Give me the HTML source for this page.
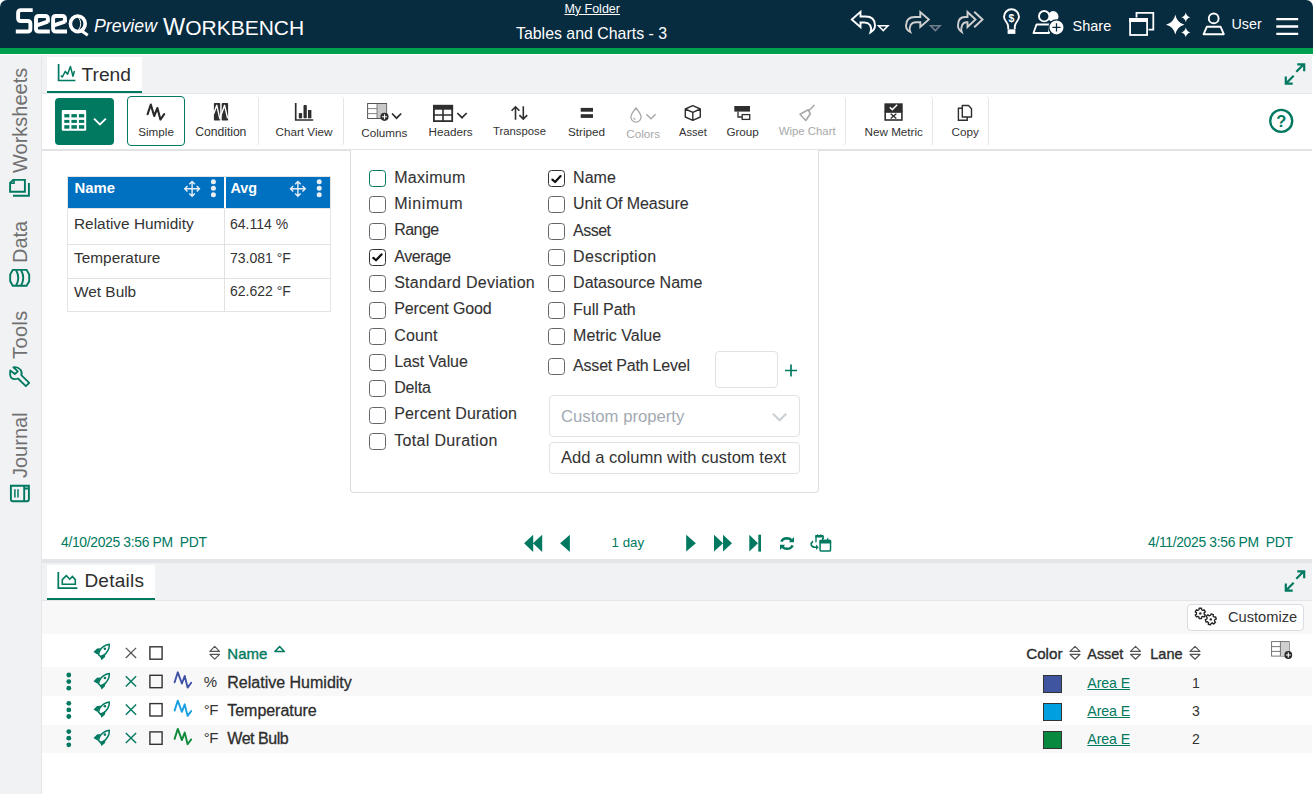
<!DOCTYPE html>
<html><head><meta charset="utf-8">
<style>
*{box-sizing:border-box;margin:0;padding:0}
html,body{width:1313px;height:794px;overflow:hidden;background:#fff;font-family:"Liberation Sans",sans-serif;color:#2d2d2d}
.a{position:absolute}
.t{position:absolute;white-space:nowrap;line-height:1;font-family:"Liberation Sans",sans-serif}
svg{position:absolute;overflow:visible}
#hdr{left:0;top:0;width:1313px;height:48px;background:#072b3f;border-radius:7px 7px 0 0}
#stripe{left:0;top:48px;width:1313px;height:6px;background:#00a050}
#side{left:0;top:55px;width:42px;height:739px;background:#f1f2f4;border-right:1px solid #e4e6e9}
.tabbar{background:#f1f2f4}
.tab{background:#fff;border-bottom:2px solid #007960}
.tlab{font-size:11.7px;color:#333}
.dis{color:#a8a8a8}
.grp{border-right:1px solid #e4e5e7;border-radius:0 4px 4px 0}
.cb{position:absolute;width:17px;height:17px;border:1.4px solid #62666b;border-radius:3.5px;background:#fff}
.dd{font-size:16px;color:#333;-webkit-text-stroke:0.1px #333}
.row{position:absolute;left:42px;width:1270px;height:29px}
.sb{-webkit-text-stroke:0.35px currentColor}
.sb2{-webkit-text-stroke:0.3px currentColor}
.teal{color:#007960}
</style></head><body>
<!-- HEADER -->
<div id="hdr" class="a"></div>
<div id="stripe" class="a"></div>
<div class="t" style="left:94px;top:18.4px;font-size:17.7px;font-style:italic;color:#fff">Preview</div>
<div class="t" style="left:163px;top:15.9px;font-size:23.5px;color:#fff">W<span style="font-size:21px">ORKBENCH</span></div>
<div class="t" style="left:564.4px;top:2.9px;font-size:12.5px;color:#fff;text-decoration:underline">My Folder</div>
<div class="t" style="left:516px;top:25.8px;font-size:15.9px;color:#fff">Tables and Charts - 3</div>
<div class="t" style="left:1072.5px;top:19px;font-size:14.5px;color:#fff">Share</div>
<div class="t" style="left:1231.5px;top:16.6px;font-size:14.3px;color:#fff">User</div>

<!-- SIDEBAR -->
<div id="side" class="a"></div>
<div class="t" style="left:10.0px;top:173.0px;font-size:20px;color:#707070;transform-origin:0 0;transform:rotate(-90deg)">Worksheets</div>
<div class="t" style="left:10.0px;top:262.5px;font-size:20px;color:#707070;transform-origin:0 0;transform:rotate(-90deg)">Data</div>
<div class="t" style="left:10.0px;top:358.5px;font-size:20px;color:#707070;transform-origin:0 0;transform:rotate(-90deg);letter-spacing:0.4px">Tools</div>
<div class="t" style="left:10.0px;top:477.5px;font-size:20px;color:#707070;transform-origin:0 0;transform:rotate(-90deg)">Journal</div>


<!-- TREND TAB BAR -->
<div class="a tabbar" style="left:42px;top:55px;width:1270px;height:38px"></div>
<div class="a tab" style="left:47px;top:57px;width:95px;height:36px"></div>
<div class="t" style="left:81.5px;top:64.5px;font-size:19.2px;color:#2d2d2d">Trend</div>

<!-- TOOLBAR -->
<div class="a" style="left:42px;top:93px;width:1270px;height:58px;background:#fff;border-top:1px solid #e3e5e8;border-bottom:2px solid #e1e3e6"></div>
<div class="a" style="left:55px;top:98px;width:59px;height:47px;background:#007960;border-radius:4px"></div>
<div class="a grp" style="left:127px;top:96px;width:132px;height:50px"></div>
<div class="a" style="left:127px;top:96px;width:58px;height:50px;border:1.3px solid #007960;border-radius:4px"></div>
<div class="a grp" style="left:259px;top:96px;width:85px;height:50px"></div>
<div class="a grp" style="left:343px;top:96px;width:503px;height:50px"></div>
<div class="a grp" style="left:846px;top:96px;width:87px;height:50px"></div>
<div class="a grp" style="left:933px;top:96px;width:56px;height:50px"></div>
<div class="t tlab" style="left:138.2px;top:126px">Simple</div>
<div class="t tlab" style="left:195.3px;top:126px;font-size:12.2px;letter-spacing:-0.05px">Condition</div>
<div class="t tlab" style="left:275.5px;top:126px">Chart View</div>
<div class="t tlab" style="left:361.3px;top:127px">Columns</div>
<div class="t tlab" style="left:428.5px;top:126px">Headers</div>
<div class="t tlab" style="left:493px;top:126px;font-size:11.3px;top:126.4px">Transpose</div>
<div class="t tlab" style="left:568px;top:126px">Striped</div>
<div class="t tlab dis" style="left:626.3px;top:127.5px">Colors</div>
<div class="t tlab" style="left:679px;top:126.5px;font-size:11.1px">Asset</div>
<div class="t tlab" style="left:726.4px;top:126px">Group</div>
<div class="t tlab dis" style="left:778.7px;top:126.3px;font-size:11.4px">Wipe Chart</div>
<div class="t tlab" style="left:864.5px;top:126px">New Metric</div>
<div class="t tlab" style="left:951.5px;top:126px">Copy</div>

<!-- TABLE -->
<div class="a" style="left:67px;top:176px;width:264px;height:136px;border:1px solid #e4e4e4;background:#fff"></div>
<div class="a" style="left:68px;top:177px;width:262px;height:31px;background:#0070c0"></div>
<div class="a" style="left:67px;top:208px;width:264px;height:1px;background:#e4e4e4"></div>
<div class="a" style="left:224px;top:177px;width:1.5px;height:31px;background:#fff"></div>
<div class="a" style="left:224px;top:208px;width:1px;height:104px;background:#e2e2e2"></div>
<div class="a" style="left:67px;top:244px;width:264px;height:1px;background:#e2e2e2"></div>
<div class="a" style="left:67px;top:278px;width:264px;height:1px;background:#e2e2e2"></div>
<div class="t" style="left:74.5px;top:181.2px;font-size:14.9px;font-weight:bold;color:#fff">Name</div>
<div class="t" style="left:230.5px;top:181.2px;font-size:14.4px;font-weight:bold;color:#fff">Avg</div>
<div class="t" style="left:74px;top:215.6px;font-size:15.4px;color:#333">Relative Humidity</div>
<div class="t" style="left:74px;top:249.7px;font-size:15.4px;color:#333">Temperature</div>
<div class="t" style="left:74px;top:283.7px;font-size:15.4px;color:#333">Wet Bulb</div>
<div class="t" style="left:230px;top:216.7px;font-size:14px;color:#333">64.114 %</div>
<div class="t" style="left:230px;top:250.8px;font-size:14px;color:#333">73.081 °F</div>
<div class="t" style="left:230px;top:284.3px;font-size:14px;color:#333">62.622 °F</div>

<!-- DROPDOWN -->
<div class="a" style="left:350px;top:150px;width:469px;height:343px;background:#fff;border:1px solid #dadde1;border-top:none;border-radius:0 0 4px 4px"></div>

<div class="cb" style="left:369px;top:170.0px;border-color:#007960"></div>
<div class="t dd" style="left:394.2px;top:169.7px;font-size:16px;letter-spacing:0.31px">Maximum</div>
<div class="cb" style="left:369px;top:196.3px;"></div>
<div class="t dd" style="left:394.2px;top:196.0px;font-size:16px;letter-spacing:0.60px">Minimum</div>
<div class="cb" style="left:369px;top:222.6px;"></div>
<div class="t dd" style="left:394.2px;top:222.3px;font-size:16px;letter-spacing:-0.54px">Range</div>
<div class="cb" style="left:369px;top:248.9px;border-color:#333"></div>
<div class="t dd" style="left:394.2px;top:248.6px;font-size:16px;letter-spacing:-0.37px">Average</div>
<div class="cb" style="left:369px;top:275.2px;"></div>
<div class="t dd" style="left:394.2px;top:274.9px;font-size:16px;letter-spacing:0.26px">Standard Deviation</div>
<div class="cb" style="left:369px;top:301.5px;"></div>
<div class="t dd" style="left:394.2px;top:301.2px;font-size:16px;letter-spacing:-0.11px">Percent Good</div>
<div class="cb" style="left:369px;top:327.8px;"></div>
<div class="t dd" style="left:394.2px;top:327.5px;font-size:16px;letter-spacing:0.15px">Count</div>
<div class="cb" style="left:369px;top:354.1px;"></div>
<div class="t dd" style="left:394.2px;top:353.8px;font-size:16px;letter-spacing:-0.09px">Last Value</div>
<div class="cb" style="left:369px;top:380.4px;"></div>
<div class="t dd" style="left:394.2px;top:380.1px;font-size:16px;letter-spacing:-0.16px">Delta</div>
<div class="cb" style="left:369px;top:406.7px;"></div>
<div class="t dd" style="left:394.2px;top:406.4px;font-size:16px;letter-spacing:0.18px">Percent Duration</div>
<div class="cb" style="left:369px;top:433.0px;"></div>
<div class="t dd" style="left:394.2px;top:432.7px;font-size:16px;letter-spacing:0.34px">Total Duration</div>
<div class="cb" style="left:548.2px;top:170.1px;border-color:#333"></div>
<div class="t dd" style="left:573.1px;top:170.0px;font-size:16px;letter-spacing:0.01px">Name</div>
<div class="cb" style="left:548.2px;top:196.4px;"></div>
<div class="t dd" style="left:573.1px;top:196.3px;font-size:16px;letter-spacing:-0.07px">Unit Of Measure</div>
<div class="cb" style="left:548.2px;top:222.7px;"></div>
<div class="t dd" style="left:573.1px;top:222.6px;font-size:16px;letter-spacing:-0.51px">Asset</div>
<div class="cb" style="left:548.2px;top:249.0px;"></div>
<div class="t dd" style="left:573.1px;top:248.9px;font-size:16px;letter-spacing:0.29px">Description</div>
<div class="cb" style="left:548.2px;top:275.3px;"></div>
<div class="t dd" style="left:573.1px;top:275.2px;font-size:16px;letter-spacing:0.02px">Datasource Name</div>
<div class="cb" style="left:548.2px;top:301.6px;"></div>
<div class="t dd" style="left:573.1px;top:301.5px;font-size:16px;letter-spacing:-0.06px">Full Path</div>
<div class="cb" style="left:548.2px;top:327.9px;"></div>
<div class="t dd" style="left:573.1px;top:327.8px;font-size:16px;letter-spacing:0.03px">Metric Value</div>
<div class="cb" style="left:548.2px;top:358.1px"></div>
<div class="t dd" style="left:573.1px;top:358.0px;font-size:16px;letter-spacing:-0.21px">Asset Path Level</div>
<div class="a" style="left:715px;top:351.4px;width:63px;height:37px;border:1px solid #dfe2e6;border-radius:4px"></div>
<div class="a" style="left:548.5px;top:395.3px;width:251.5px;height:42px;border:1px solid #dfe2e6;border-radius:4px"></div>
<div class="t" style="left:561px;top:408.9px;font-size:16.7px;color:#a2aab3">Custom property</div>
<div class="a" style="left:548.5px;top:441.6px;width:251.5px;height:32px;border:1px solid #dfe2e6;border-radius:4px"></div>
<div class="t" style="left:561px;top:449.9px;font-size:16.6px;color:#333">Add a column with custom text</div>
<!-- TIMEBAR -->
<div class="t teal" style="left:61px;top:536.1px;font-size:13.9px;letter-spacing:-0.33px">4/10/2025 3:56 PM&nbsp; PDT</div>
<div class="t teal" style="left:1148px;top:536.1px;font-size:13.9px;letter-spacing:-0.33px">4/11/2025 3:56 PM&nbsp; PDT</div>
<div class="t teal" style="left:611.6px;top:535.5px;font-size:13.3px">1 day</div>

<!-- SEPARATOR / DETAILS -->
<div class="a" style="left:42px;top:559px;width:1270px;height:4px;background:#e3e5e8"></div>
<div class="a tabbar" style="left:42px;top:563px;width:1270px;height:38px;border-bottom:1px solid #e3e5e8"></div>
<div class="a tab" style="left:47px;top:565px;width:108px;height:35px"></div>
<div class="t" style="left:84.4px;top:570.9px;font-size:19px;color:#2d2d2d;letter-spacing:0.25px">Details</div>
<div class="a" style="left:42px;top:601px;width:1270px;height:33px;background:#f8f8f9"></div>
<div class="a" style="left:1187px;top:604px;width:117px;height:27px;background:#fff;border:1px solid #d9dce0;border-radius:4px"></div>
<div class="t" style="left:1228px;top:610.3px;font-size:14.65px;color:#333">Customize</div>

<div class="row" style="top:667px;background:#f8f8f9"></div>
<div class="row" style="top:724.6px;height:28.4px;background:#f8f8f9"></div>

<!-- ICONS HEADER -->
<svg class="a" style="left:0;top:0" width="1313" height="794" viewBox="0 0 1313 794">
<g fill="none" stroke="#fff" stroke-width="3.9" stroke-linejoin="round">
<path d="M32.7,10.1 H21 Q18.1,10.1 18.1,13 V18.2 Q18.1,21 21,21 H27.6 Q30.4,21 30.4,23.8 V28.7 Q30.4,31.5 27.6,31.5 H15.8"/>
<path d="M47.9,22.5 V18.8 Q47.9,16 45.1,16 H38.8 Q36,16 36,18.8 V28.7 Q36,31.5 38.8,31.5 H49.8 M36,25.6 L47.9,21.6"/>
<path d="M65,22.5 V18.8 Q65,16 62.2,16 H55.9 Q53.1,16 53.1,18.8 V28.7 Q53.1,31.5 55.9,31.5 H67 M53.1,25.6 L65,21.6"/>
<ellipse cx="77.8" cy="23.8" rx="7.4" ry="7.8" stroke-width="3.6"/>
<path d="M81,30.5 L87.8,35.2" stroke-width="3"/>
</g>
<path d="M78.5,17.5 Q83,23.8 78.5,30" fill="none" stroke="#fff" stroke-width="1"/>
<!-- undo -->
<path d="M851.8,19.5 L860.5,11.8 V16.5 H865.5 Q875,16.5 875,25.5 Q875,29.8 870.5,32.3 Q872,28.5 870,25 Q868,22.5 864.5,22.5 H860.5 V27.2 Z" fill="none" stroke="#fff" stroke-width="1.9" stroke-linejoin="miter"/>
<path d="M878.5,25.8 H888 L883.25,30.6 Z" fill="none" stroke="#fff" stroke-width="1.5" stroke-linejoin="miter"/>
<!-- redo -->
<path d="M928.8,19.5 L920.3,12 V17 H915 Q906,17 906,25.8 Q906,29.8 910.3,32 Q908.8,28.5 910.6,25 Q912.5,22.2 916,22.2 H920.3 V27 Z" fill="none" stroke="#cfcfcf" stroke-width="1.9" stroke-linejoin="miter"/>
<path d="M930.6,25.8 H940 L935.3,30.6 Z" fill="none" stroke="#6f7e88" stroke-width="1.6" stroke-linejoin="miter"/>
<!-- forward all -->
<path d="M975.5,19.5 L967.5,12 V17 H965 Q958,17 958,25.5 Q958,29.5 961.8,32 Q960.5,28.5 962.2,25 Q963.8,22.2 966.5,22.2 H967.5 V27 Z" fill="none" stroke="#cfcfcf" stroke-width="1.9" stroke-linejoin="miter"/>
<path d="M974.2,11.8 L982.5,19.5 L974.2,27.2" fill="none" stroke="#cfcfcf" stroke-width="2"/>
<!-- bulb -->
<path d="M1008.2,29 V26.5 Q1008,24 1006,21.5 Q1004,19 1004,16.8 A7.5,7.5 0 0 1 1019,16.8 Q1019,19 1017,21.5 Q1015,24 1014.8,26.5 V29" fill="none" stroke="#fff" stroke-width="1.9"/>
<rect x="1007.6" y="29.3" width="7.8" height="4.6" fill="#fff"/>
<text x="1011.5" y="22.3" font-family="Liberation Sans" font-weight="bold" font-size="10.5" fill="#fff" text-anchor="middle">$</text>
<!-- share -->
<circle cx="1053.2" cy="16.4" r="5.3" fill="#fff"/>
<circle cx="1044.2" cy="16.2" r="5.2" fill="#072b3f" stroke="#fff" stroke-width="1.9"/>
<path d="M1036.5,24.5 H1050 L1049,33 H1033.5 Z" fill="#072b3f" stroke="#fff" stroke-width="1.9" stroke-linejoin="round"/>
<circle cx="1056.5" cy="27.4" r="7.6" fill="#fff" stroke="#072b3f" stroke-width="1.2"/>
<path d="M1056.5,23.3 V31.5 M1052.4,27.4 H1060.6" stroke="#072b3f" stroke-width="1.3"/>
<!-- windows -->
<path d="M1136.5,17.5 V12.8 H1153.3 V29.6 H1148.5" fill="none" stroke="#fff" stroke-width="1.8"/>
<rect x="1130.1" y="19" width="17" height="16" fill="none" stroke="#fff" stroke-width="1.8"/>
<rect x="1129.2" y="18" width="18.8" height="4" fill="#fff"/>
<!-- sparkle -->
<path d="M1175.3,14.8 Q1177,23 1184.5,24.7 Q1177,26.4 1175.3,34.6 Q1173.6,26.4 1166,24.7 Q1173.6,23 1175.3,14.8 Z" fill="#fff"/>
<path d="M1185.8,12.5 Q1186.6,16.5 1190.4,17.3 Q1186.6,18.1 1185.8,22.2 Q1185,18.1 1181.2,17.3 Q1185,16.5 1185.8,12.5 Z" fill="#fff"/>
<path d="M1185.8,27.6 Q1186.6,31.6 1190.4,32.4 Q1186.6,33.2 1185.8,37.3 Q1185,33.2 1181.2,32.4 Q1185,31.6 1185.8,27.6 Z" fill="#fff"/>
<!-- user -->
<circle cx="1213.7" cy="18.4" r="4.9" fill="none" stroke="#fff" stroke-width="1.9"/>
<path d="M1206.8,26.8 H1220.6 L1223.8,34.2 H1203.6 Z" fill="none" stroke="#fff" stroke-width="1.9" stroke-linejoin="round"/>
<!-- hamburger -->
<path d="M1276.3,19.2 H1298.2 M1276.3,26.5 H1298.2 M1276.3,33.9 H1298.2" stroke="#fff" stroke-width="2.3"/>
</svg>

<!-- ICONS TOOLBAR -->
<svg class="a" style="left:0;top:0" width="1313" height="794" viewBox="0 0 1313 794">
<!-- table btn -->
<rect x="61.8" y="110.1" width="24.4" height="20.6" rx="1" fill="#fff"/>
<g fill="#007960">
<rect x="64.3" y="114.1" width="5.1" height="3.3"/><rect x="71.4" y="114.1" width="5.5" height="3.3"/><rect x="78.9" y="114.1" width="5.3" height="3.3"/>
<rect x="64.3" y="119.9" width="5.1" height="3"/><rect x="71.4" y="119.9" width="5.5" height="3"/><rect x="78.9" y="119.9" width="5.3" height="3"/>
<rect x="64.3" y="125.2" width="5.1" height="3.5"/><rect x="71.4" y="125.2" width="5.5" height="3.5"/><rect x="78.9" y="125.2" width="5.3" height="3.5"/>
</g>
<path d="M94,118.6 L99.9,124.4 L105.9,118.6" fill="none" stroke="#fff" stroke-width="1.9"/>
<!-- simple -->
<path d="M147.6,114.2 L150.8,104.6 L154.2,116 L157.4,108 L160.4,119.6 L164.2,114.2" fill="none" stroke="#2a2a2a" stroke-width="2.1" stroke-linejoin="round" stroke-linecap="round"/>
<!-- condition -->
<rect x="213.9" y="103" width="6.3" height="17.6" rx="0.8" fill="#2e2e2e"/>
<rect x="221.7" y="103" width="6.4" height="17.6" rx="0.8" fill="#2e2e2e"/>
<path d="M213.6,114 L216.8,105.3 L219.8,118.6 L221.6,113 M221.5,114 L224.6,105.3 L227.6,118.4" fill="none" stroke="#fff" stroke-width="1.4" stroke-linejoin="round"/>
<!-- chart view -->
<path d="M295.7,103 V120 H313.2" fill="none" stroke="#2e2e2e" stroke-width="1.7"/>
<rect x="298.8" y="113.1" width="3.3" height="5.2" fill="#2e2e2e"/>
<rect x="303.5" y="104.9" width="3.3" height="13.4" rx="0.8" fill="#2e2e2e"/>
<rect x="308" y="110" width="3.4" height="8.3" fill="#2e2e2e"/>
<!-- columns -->
<rect x="367.6" y="103.5" width="19" height="15" fill="#fff" stroke="#555" stroke-width="1"/>
<rect x="377" y="104" width="9.2" height="14" fill="#c9c9c9"/>
<path d="M367.6,108.6 H377 M367.6,113.6 H377 M377,103.5 V118.5" stroke="#777" stroke-width="0.9"/>
<circle cx="384.5" cy="116.8" r="4.1" fill="#2e2e2e"/>
<path d="M384.5,114.3 V119.3 M382,116.8 H387" stroke="#fff" stroke-width="1.1"/>
<path d="M392,113.5 L396.6,118.2 L401.2,113.5" fill="none" stroke="#2e2e2e" stroke-width="1.7"/>
<!-- headers -->
<rect x="433.9" y="105.8" width="18.3" height="15.3" fill="none" stroke="#2e2e2e" stroke-width="1.8"/>
<rect x="433" y="104.9" width="20.1" height="4.8" fill="#2e2e2e"/>
<path d="M433.9,115 H452.2 M443,109 V121" stroke="#2e2e2e" stroke-width="1.6"/>
<path d="M457.3,113 L462,117.7 L466.7,113" fill="none" stroke="#2e2e2e" stroke-width="1.7"/>
<!-- transpose -->
<path d="M515.5,119.7 V107.2 M511.6,110.8 L515.5,106.8 L519.4,110.8 M523.3,106.2 V118.7 M519.4,115.1 L523.3,119.1 L527.2,115.1" fill="none" stroke="#2e2e2e" stroke-width="1.6"/>
<!-- striped -->
<rect x="580.7" y="107.9" width="12.3" height="3.8" fill="#2e2e2e"/>
<rect x="580.7" y="114.2" width="12.3" height="3.7" fill="#2e2e2e"/>
<!-- colors -->
<path d="M636,108 Q631,114 630.9,117 A5.1,5.1 0 0 0 641.1,117 Q641,114 636,108 Z" fill="none" stroke="#a8a8a8" stroke-width="1.3"/>
<path d="M633.6,118 L635.3,119.5" stroke="#a8a8a8" stroke-width="1.1"/>
<path d="M646.3,114.2 L651,118.8 L655.6,114.2" fill="none" stroke="#a8a8a8" stroke-width="1.5"/>
<!-- asset cube -->
<path d="M692.8,105.6 L700.3,109 V117 L692.8,120.3 L685.3,117 V109 Z M685.3,109 L692.8,112.4 L700.3,109 M692.8,112.4 V120.3" fill="none" stroke="#2e2e2e" stroke-width="1.4" stroke-linejoin="round"/>
<!-- group -->
<rect x="734.3" y="106" width="15.7" height="5.6" fill="#2e2e2e"/>
<path d="M738,111.6 V117 H742" fill="none" stroke="#2e2e2e" stroke-width="1.3"/>
<rect x="742.2" y="114.6" width="7.5" height="4.8" fill="none" stroke="#2e2e2e" stroke-width="1.3"/>
<!-- wipe -->
<path d="M814.5,105 L808.5,111" stroke="#a8a8a8" stroke-width="1.6"/>
<path d="M800,114.3 L808.3,109.8 L810.3,113.8 L805.8,120.5 Z" fill="none" stroke="#a8a8a8" stroke-width="1.6" stroke-linejoin="round"/>
<!-- new metric -->
<rect x="884.4" y="103.3" width="18.3" height="8.8" fill="#2e2e2e"/>
<rect x="885.2" y="112" width="16.7" height="8" fill="none" stroke="#2e2e2e" stroke-width="1.6"/>
<path d="M889.8,107.3 L892.3,109.6 L897.2,104.8" fill="none" stroke="#fff" stroke-width="1.5"/>
<path d="M890.7,113.8 L896.3,118.6 M896.3,113.8 L890.7,118.6" stroke="#2e2e2e" stroke-width="1.3"/>
<!-- copy -->
<path d="M962.3,108.2 H958.4 V120.2 H967.2 V117" fill="none" stroke="#2e2e2e" stroke-width="1.4"/>
<path d="M962.3,105.5 H968.5 L971.5,108.8 V117 H962.3 Z" fill="none" stroke="#2e2e2e" stroke-width="1.4" stroke-linejoin="round"/>
<!-- help -->
<circle cx="1281.2" cy="120.9" r="11" fill="none" stroke="#007960" stroke-width="2.4"/>
<text x="1281.3" y="127" font-family="Liberation Sans" font-weight="bold" font-size="16.5" fill="#007960" text-anchor="middle">?</text>
<!-- expand top -->
<path d="M1296.3,71.8 L1303.8,64.3 M1297.3,64.3 H1304.2 V71.2 M1293.7,75.8 L1286.2,83.3 M1285.8,76.4 V83.7 H1292.7" fill="none" stroke="#007960" stroke-width="2.2"/>
<!-- expand details -->
<path d="M1296.3,578.8 L1303.8,571.3 M1297.3,571.3 H1304.2 V578.2 M1293.7,582.8 L1286.2,590.3 M1285.8,583.4 V590.7 H1292.7" fill="none" stroke="#007960" stroke-width="2.2"/>
<!-- trend tab icon -->
<path d="M58.6,64.1 V80.5 H75.4" fill="none" stroke="#007960" stroke-width="1.7"/>
<path d="M60.9,75.4 L62.3,77 L65.3,71.4 L67.6,74.2 L70.4,66.4 L73,76.2 L74.4,71" fill="none" stroke="#007960" stroke-width="1.5" stroke-linejoin="round"/>
<!-- details tab icon -->
<path d="M58.3,572 V588.2 H77.4" fill="none" stroke="#007960" stroke-width="1.7"/>
<path d="M62.3,584.3 V579.6 L66.3,575.6 L69.8,579.2 L72.4,576.4 L75.3,579.6 V584.3 Z" fill="none" stroke="#007960" stroke-width="1.6" stroke-linejoin="miter"/>
</svg>

<!-- ICONS CONTENT -->
<svg class="a" style="left:0;top:0" width="1313" height="794" viewBox="0 0 1313 794">
<!-- sidebar icons -->
<g fill="none" stroke="#007960" stroke-width="1.9">
<path d="M13.2,179.9 H24.9 V191.8 H10.1 V183 Z"/>
<path d="M10.3,183.2 H14 V179.9" stroke-width="1.6"/>
<path d="M28.9,183 V195.7 H13"/>
<path d="M12.8,269.9 H26.6 L29.2,274.5 V281.3 L26.6,285.8 H12.8 L10.2,281.3 V274.5 Z"/>
<path d="M16,270 Q20.5,277.8 16,285.7 M21,270 Q25.5,277.8 21,285.7" />
<path d="M13.3,367.3 Q17.5,366.5 20.3,369.5 Q22.5,372.3 21.3,375.2 L29.2,382.8 L25.8,386.2 L18,378.5 Q14,380 11.5,378 Q9.5,376 10.3,370.5 L14.8,374 L17.8,371.3 Z" stroke-width="1.8" stroke-linejoin="round"/>
<path d="M10.9,485.8 H28.9 V499.3 Q28.9,501.3 26.9,501.3 H12.9 Q10.9,501.3 10.9,499.3 Z M24.2,486.5 V501 M24.5,488.5 H28.5"/>
<path d="M14.9,489.2 V497.5 M18,489.2 V497.5" stroke-width="1.5"/>
</g>
<!-- table header icons -->
<g stroke="#e9eef5" fill="none" stroke-width="1.4">
<path d="M185,188.8 H199.2 M192.1,181.7 V195.9 M189.3,184.2 L192.1,181.4 L194.9,184.2 M189.3,193.4 L192.1,196.2 L194.9,193.4 M187.5,186 L184.7,188.8 L187.5,191.6 M196.7,186 L199.5,188.8 L196.7,191.6"/>
<path d="M290.8,188.8 H305 M297.9,181.7 V195.9 M295.1,184.2 L297.9,181.4 L300.7,184.2 M295.1,193.4 L297.9,196.2 L300.7,193.4 M293.3,186 L290.5,188.8 L293.3,191.6 M302.5,186 L305.3,188.8 L302.5,191.6"/>
</g>
<g fill="#e9eef5">
<circle cx="213.4" cy="181.7" r="2.5"/><circle cx="213.4" cy="188.2" r="2.5"/><circle cx="213.4" cy="194.7" r="2.5"/>
<circle cx="319.2" cy="181.7" r="2.5"/><circle cx="319.2" cy="188.2" r="2.5"/><circle cx="319.2" cy="194.7" r="2.5"/>
</g>
<!-- dropdown checks -->
<path d="M373.3,257.9 L376,260.3 L381.5,254.4" fill="none" stroke="#111" stroke-width="2.2" stroke-linecap="round" stroke-linejoin="round"/>
<path d="M552.4,179.6 L555.1,182 L560.6,176.1" fill="none" stroke="#111" stroke-width="2.2" stroke-linecap="round" stroke-linejoin="round"/>
<path d="M791,364.5 V376.5 M785,370.5 H797" stroke="#007960" stroke-width="1.7"/>
<path d="M773,413.8 L779.6,420.2 L786.2,413.8" fill="none" stroke="#cbd1d7" stroke-width="2.2"/>
<!-- timebar -->
<g fill="#007960">
<path d="M524.1,543.3 L533.2,534.7 V551.9 Z M533,543.3 L542.2,534.7 V551.9 Z"/>
<path d="M560.1,543.3 L569.9,534.7 V551.9 Z"/>
<path d="M695.9,543.2 L686.2,534.7 V551.6 Z"/>
<path d="M723,543.2 L714,534.7 V551.6 Z M732,543.2 L723,534.7 V551.6 Z"/>
<path d="M758,543.2 L749.3,534.7 V551.6 Z"/>
<rect x="758.3" y="534.7" width="2.7" height="16.9"/>
</g>
<path d="M781.4,541.6 Q782.6,538.3 787,538.2 Q790.3,538.2 791.6,540.8 M792.6,545.4 Q791.4,548.7 787,548.8 Q783.7,548.8 782.4,546.2" fill="none" stroke="#007960" stroke-width="2.5"/>
<path d="M788.8,542.2 L794,542.2 L794,537 Z M785.2,544.8 L780,544.8 L780,550 Z" fill="#007960"/>
<path d="M816,542.2 V536.5 Q816,535.6 817,535.6 H822.3 Q823.2,535.6 823.2,536.5 V539" fill="none" stroke="#007960" stroke-width="1.4"/>
<rect x="815.3" y="535" width="8" height="2.6" rx="0.6" fill="#007960"/>
<path d="M817.6,534.2 V535.5 M820.7,534.2 V535.5" stroke="#007960" stroke-width="1"/>
<rect x="820.1" y="540.5" width="10.4" height="10.6" rx="1.2" fill="#fff" stroke="#007960" stroke-width="1.5"/>
<rect x="819.4" y="539.8" width="11.8" height="3.8" rx="1" fill="#007960"/>
<path d="M822.6,538 V540 M827.7,538 V540" stroke="#007960" stroke-width="1.2"/>
<path d="M813,541.2 Q810.8,542.8 811.3,545 Q812,547.3 815.5,547.3 H816.5" fill="none" stroke="#007960" stroke-width="1.6"/>
<path d="M816,544.6 L818.7,547.3 L816,550 Z" fill="#007960"/>
<!-- gears -->
<g fill="none" stroke="#222" stroke-width="1.3" stroke-linejoin="round">
<path d="M1199.09,608.24 L1201.51,608.24 L1201.58,609.72 L1202.85,610.45 L1204.16,609.77 L1205.37,611.87 L1204.13,612.67 L1204.13,614.13 L1205.37,614.93 L1204.16,617.03 L1202.85,616.35 L1201.58,617.08 L1201.51,618.56 L1199.09,618.56 L1199.02,617.08 L1197.75,616.35 L1196.44,617.03 L1195.23,614.93 L1196.47,614.13 L1196.47,612.67 L1195.23,611.87 L1196.44,609.77 L1197.75,610.45 L1199.02,609.72 Z"/>
<path d="M1210.96,613.90 L1213.39,614.55 L1213.04,616.09 L1214.10,617.15 L1215.64,616.79 L1216.30,619.22 L1214.79,619.69 L1214.40,621.13 L1215.48,622.29 L1213.71,624.07 L1212.55,623.00 L1211.10,623.39 L1210.64,624.90 L1208.21,624.25 L1208.56,622.71 L1207.50,621.65 L1205.96,622.01 L1205.30,619.58 L1206.81,619.11 L1207.20,617.67 L1206.12,616.51 L1207.89,614.73 L1209.05,615.80 L1210.50,615.41 Z"/>
</g>
<circle cx="1200.3" cy="613.4" r="1.2" fill="#222"/><circle cx="1210.8" cy="619.4" r="1.2" fill="#222"/>
<!-- details header -->
<g>
<path d="M109.3,644.3 Q103,645 99.5,651 L98.5,654.5 L101,657 Q107,654 109,648 Z" fill="none" stroke="#007960" stroke-width="1.5" stroke-linejoin="round"/>
<path d="M93.5,652 L97,648.5 L100.5,648.2 L97.5,654.5 Z M100,656 L105.5,653.5 L105,657 L101.5,660.2 Z" fill="#007960"/>
<circle cx="104.9" cy="648.7" r="1.3" fill="#007960"/>
</g>
<path d="M125.8,647.9 L136.1,658 M136.1,647.9 L125.8,658" stroke="#555" stroke-width="1.3"/>
<rect x="149.9" y="646.8" width="12.2" height="12.4" fill="none" stroke="#333" stroke-width="1.4"/>
<path d="M209.9,651.4 L214.7,646.4 L219.5,651.4 Z M209.9,654.3 L214.7,659.2 L219.5,654.3 Z" fill="none" stroke="#555" stroke-width="1.2" stroke-linejoin="round"/>
<path d="M274.9,651.5 L279.6,646.5 L284.3,651.5 Z" fill="none" stroke="#007960" stroke-width="1.6" stroke-linejoin="round"/>
<path d="M1070,651.4 L1075,646.4 L1080,651.4 Z M1070,654.3 L1075,659.2 L1080,654.3 Z M1130.5,651.4 L1135.5,646.4 L1140.5,651.4 Z M1130.5,654.3 L1135.5,659.2 L1140.5,654.3 Z M1190,651.4 L1195,646.4 L1200,651.4 Z M1190,654.3 L1195,659.2 L1200,654.3 Z" fill="none" stroke="#555" stroke-width="1.2" stroke-linejoin="round"/>
<!-- column add icon -->
<rect x="1271.6" y="641.6" width="17.6" height="14.5" fill="#fff" stroke="#666" stroke-width="0.9"/>
<rect x="1280.6" y="642" width="8.2" height="13.7" fill="#cfcfcf"/>
<path d="M1271.6,646.6 H1280.4 M1271.6,651.4 H1280.4 M1280.4,641.6 V656" stroke="#666" stroke-width="0.9"/>
<circle cx="1288.3" cy="655" r="3.9" fill="#2a2a2a"/>
<path d="M1288.3,652.6 V657.4 M1285.9,655 H1290.7" stroke="#fff" stroke-width="1.1"/>
</svg>
<div class="t teal sb" style="left:227.3px;top:646.3px;font-size:15px">Name</div>
<div class="t sb" style="left:1026.2px;top:645.9px;font-size:15.2px;color:#2d2d2d">Color</div>
<div class="t sb" style="left:1087.3px;top:646.6px;font-size:14.4px;color:#2d2d2d">Asset</div>
<div class="t sb" style="left:1150.3px;top:646.5px;font-size:14.5px;color:#2d2d2d">Lane</div>
<div class="t" style="left:203.8px;top:674.0px;font-size:15px;color:#333;letter-spacing:-0.3px">%</div>
<div class="t sb2" style="left:227.3px;top:675.2px;font-size:16px;color:#2d2d2d;letter-spacing:-0.00px">Relative Humidity</div>
<div class="a" style="left:1043px;top:675.0px;width:19px;height:18px;background:#4055a0;border:1px solid #333"></div>
<div class="t teal" style="left:1087.3px;top:676.2px;font-size:14.2px;text-decoration:underline;letter-spacing:-0.1px">Area E</div>
<div class="t" style="left:1192px;top:676.3px;font-size:14px;color:#333">1</div>
<div class="t" style="left:203.8px;top:702.0px;font-size:15px;color:#333;letter-spacing:-0.6px">°F</div>
<div class="t sb2" style="left:227.3px;top:703.2px;font-size:16px;color:#2d2d2d;letter-spacing:-0.04px">Temperature</div>
<div class="a" style="left:1043px;top:703.1px;width:19px;height:18px;background:#009fe0;border:1px solid #333"></div>
<div class="t teal" style="left:1087.3px;top:704.2px;font-size:14.2px;text-decoration:underline;letter-spacing:-0.1px">Area E</div>
<div class="t" style="left:1192px;top:704.3px;font-size:14px;color:#333">3</div>
<div class="t" style="left:203.8px;top:730.1px;font-size:15px;color:#333;letter-spacing:-0.6px">°F</div>
<div class="t sb2" style="left:227.3px;top:731.3px;font-size:16px;color:#2d2d2d;letter-spacing:-0.46px">Wet Bulb</div>
<div class="a" style="left:1043px;top:731.2px;width:19px;height:18px;background:#078a3f;border:1px solid #333"></div>
<div class="t teal" style="left:1087.3px;top:732.3px;font-size:14.2px;text-decoration:underline;letter-spacing:-0.1px">Area E</div>
<div class="t" style="left:1192px;top:732.4px;font-size:14px;color:#333">2</div>
<svg class="a" style="left:0;top:0" width="1313" height="794" viewBox="0 0 1313 794">
<g transform="translate(0,0.00)"><circle cx="68.8" cy="675" r="2.4" fill="#007960"/><circle cx="68.8" cy="681.6" r="2.4" fill="#007960"/><circle cx="68.8" cy="688.2" r="2.4" fill="#007960"/><g transform="translate(0,29.3)"><path d="M109.3,644.3 Q103,645 99.5,651 L98.5,654.5 L101,657 Q107,654 109,648 Z" fill="none" stroke="#007960" stroke-width="1.5" stroke-linejoin="round"/><path d="M93.5,652 L97,648.5 L100.5,648.2 L97.5,654.5 Z M100,656 L105.5,653.5 L105,657 L101.5,660.2 Z" fill="#007960"/><circle cx="104.9" cy="648.7" r="1.3" fill="#007960"/></g><path d="M125.8,676.3 L136.1,686.4 M136.1,676.3 L125.8,686.4" stroke="#007960" stroke-width="1.4"/><rect x="149.9" y="675.3" width="12.2" height="12.4" fill="none" stroke="#333" stroke-width="1.4"/><path d="M174.6,682.3 L177.8,672.3 L181.9,683.5 L184.7,676 L187.6,687.6 L191.2,682.8" fill="none" stroke="#3f51a5" stroke-width="1.9" stroke-linejoin="round" stroke-linecap="round"/></g>
<g transform="translate(0,28.3)"><circle cx="68.8" cy="675" r="2.4" fill="#007960"/><circle cx="68.8" cy="681.6" r="2.4" fill="#007960"/><circle cx="68.8" cy="688.2" r="2.4" fill="#007960"/><g transform="translate(0,29.3)"><path d="M109.3,644.3 Q103,645 99.5,651 L98.5,654.5 L101,657 Q107,654 109,648 Z" fill="none" stroke="#007960" stroke-width="1.5" stroke-linejoin="round"/><path d="M93.5,652 L97,648.5 L100.5,648.2 L97.5,654.5 Z M100,656 L105.5,653.5 L105,657 L101.5,660.2 Z" fill="#007960"/><circle cx="104.9" cy="648.7" r="1.3" fill="#007960"/></g><path d="M125.8,676.3 L136.1,686.4 M136.1,676.3 L125.8,686.4" stroke="#007960" stroke-width="1.4"/><rect x="149.9" y="675.3" width="12.2" height="12.4" fill="none" stroke="#333" stroke-width="1.4"/><path d="M174.6,682.3 L177.8,672.3 L181.9,683.5 L184.7,676 L187.6,687.6 L191.2,682.8" fill="none" stroke="#1a9fe0" stroke-width="1.9" stroke-linejoin="round" stroke-linecap="round"/></g>
<g transform="translate(0,56.6)"><circle cx="68.8" cy="675" r="2.4" fill="#007960"/><circle cx="68.8" cy="681.6" r="2.4" fill="#007960"/><circle cx="68.8" cy="688.2" r="2.4" fill="#007960"/><g transform="translate(0,29.3)"><path d="M109.3,644.3 Q103,645 99.5,651 L98.5,654.5 L101,657 Q107,654 109,648 Z" fill="none" stroke="#007960" stroke-width="1.5" stroke-linejoin="round"/><path d="M93.5,652 L97,648.5 L100.5,648.2 L97.5,654.5 Z M100,656 L105.5,653.5 L105,657 L101.5,660.2 Z" fill="#007960"/><circle cx="104.9" cy="648.7" r="1.3" fill="#007960"/></g><path d="M125.8,676.3 L136.1,686.4 M136.1,676.3 L125.8,686.4" stroke="#007960" stroke-width="1.4"/><rect x="149.9" y="675.3" width="12.2" height="12.4" fill="none" stroke="#333" stroke-width="1.4"/><path d="M174.6,682.3 L177.8,672.3 L181.9,683.5 L184.7,676 L187.6,687.6 L191.2,682.8" fill="none" stroke="#0f8a3a" stroke-width="1.9" stroke-linejoin="round" stroke-linecap="round"/></g>
</svg>
</body></html>
